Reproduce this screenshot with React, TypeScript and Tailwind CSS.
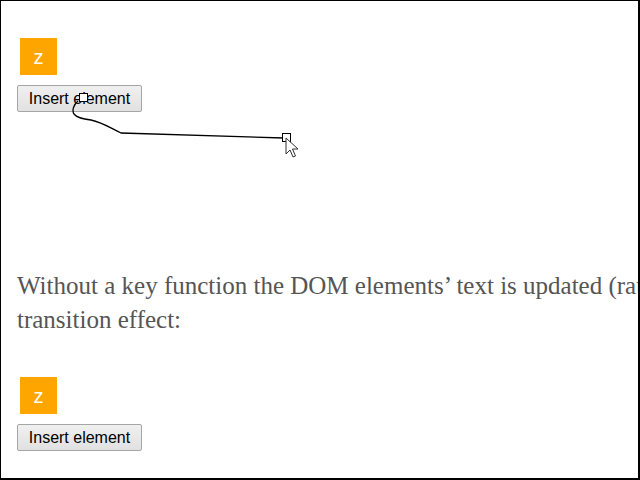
import React from 'react'

function Demo() {
  return (
    <div className="flex flex-col items-start">
      <div className="ml-[3px] flex h-[37px] w-[37px] items-center justify-center bg-[#ffa500] text-[20px] text-white [font-family:'Liberation_Sans',Arial,sans-serif]">
        z
      </div>
      <button className="mt-[10px] h-[27px] w-[125px] rounded-[2px] border border-[#a6a6a6] bg-gradient-to-b from-[#f0f0f0] to-[#e1e1e1] text-[16px] text-black [font-family:'Liberation_Sans',Arial,sans-serif]">
        Insert element
      </button>
    </div>
  )
}

// recorded mouse trail + cursor, drawn over the page
function Trail() {
  return (
    <svg className="pointer-events-none absolute left-0 top-0" width="640" height="480">
      <path
        d="M77 100 C72 104 71 110 73 113 C76 117 82 118 90 119 C100 121 108 126 120 132 L283 137"
        fill="none"
        stroke="#000"
        strokeWidth="1.3"
      />
      <rect x="78.5" y="92.5" width="8" height="8" fill="#fff" stroke="#000" strokeWidth="1" />
      <rect x="281.5" y="132.5" width="8" height="8" fill="#fff" stroke="#000" strokeWidth="1" />
      <path
        d="M285 137 L285 153 L289 149 L292 156 L294.5 155 L291.5 148 L297 148 Z"
        fill="#fff"
        stroke="#333"
        strokeWidth="1"
        strokeLinejoin="round"
      />
    </svg>
  )
}

export default function App() {
  return (
    <div className="relative h-[480px] w-[640px] overflow-hidden border-l border-t border-r-2 border-b-2 border-black bg-white">
      <div className="pl-[16px] pt-[37px]">
        <Demo />
        <p className="mt-[157px] whitespace-nowrap text-[25px] leading-[34px] text-[#555] [font-family:'Liberation_Serif',Georgia,serif]">
          Without a key function the DOM elements’ text is updated (rather than replaced), so there is no
          <br />
          transition effect:
        </p>
        <div className="mt-[40px]">
          <Demo />
        </div>
      </div>
      <Trail />
    </div>
  )
}
